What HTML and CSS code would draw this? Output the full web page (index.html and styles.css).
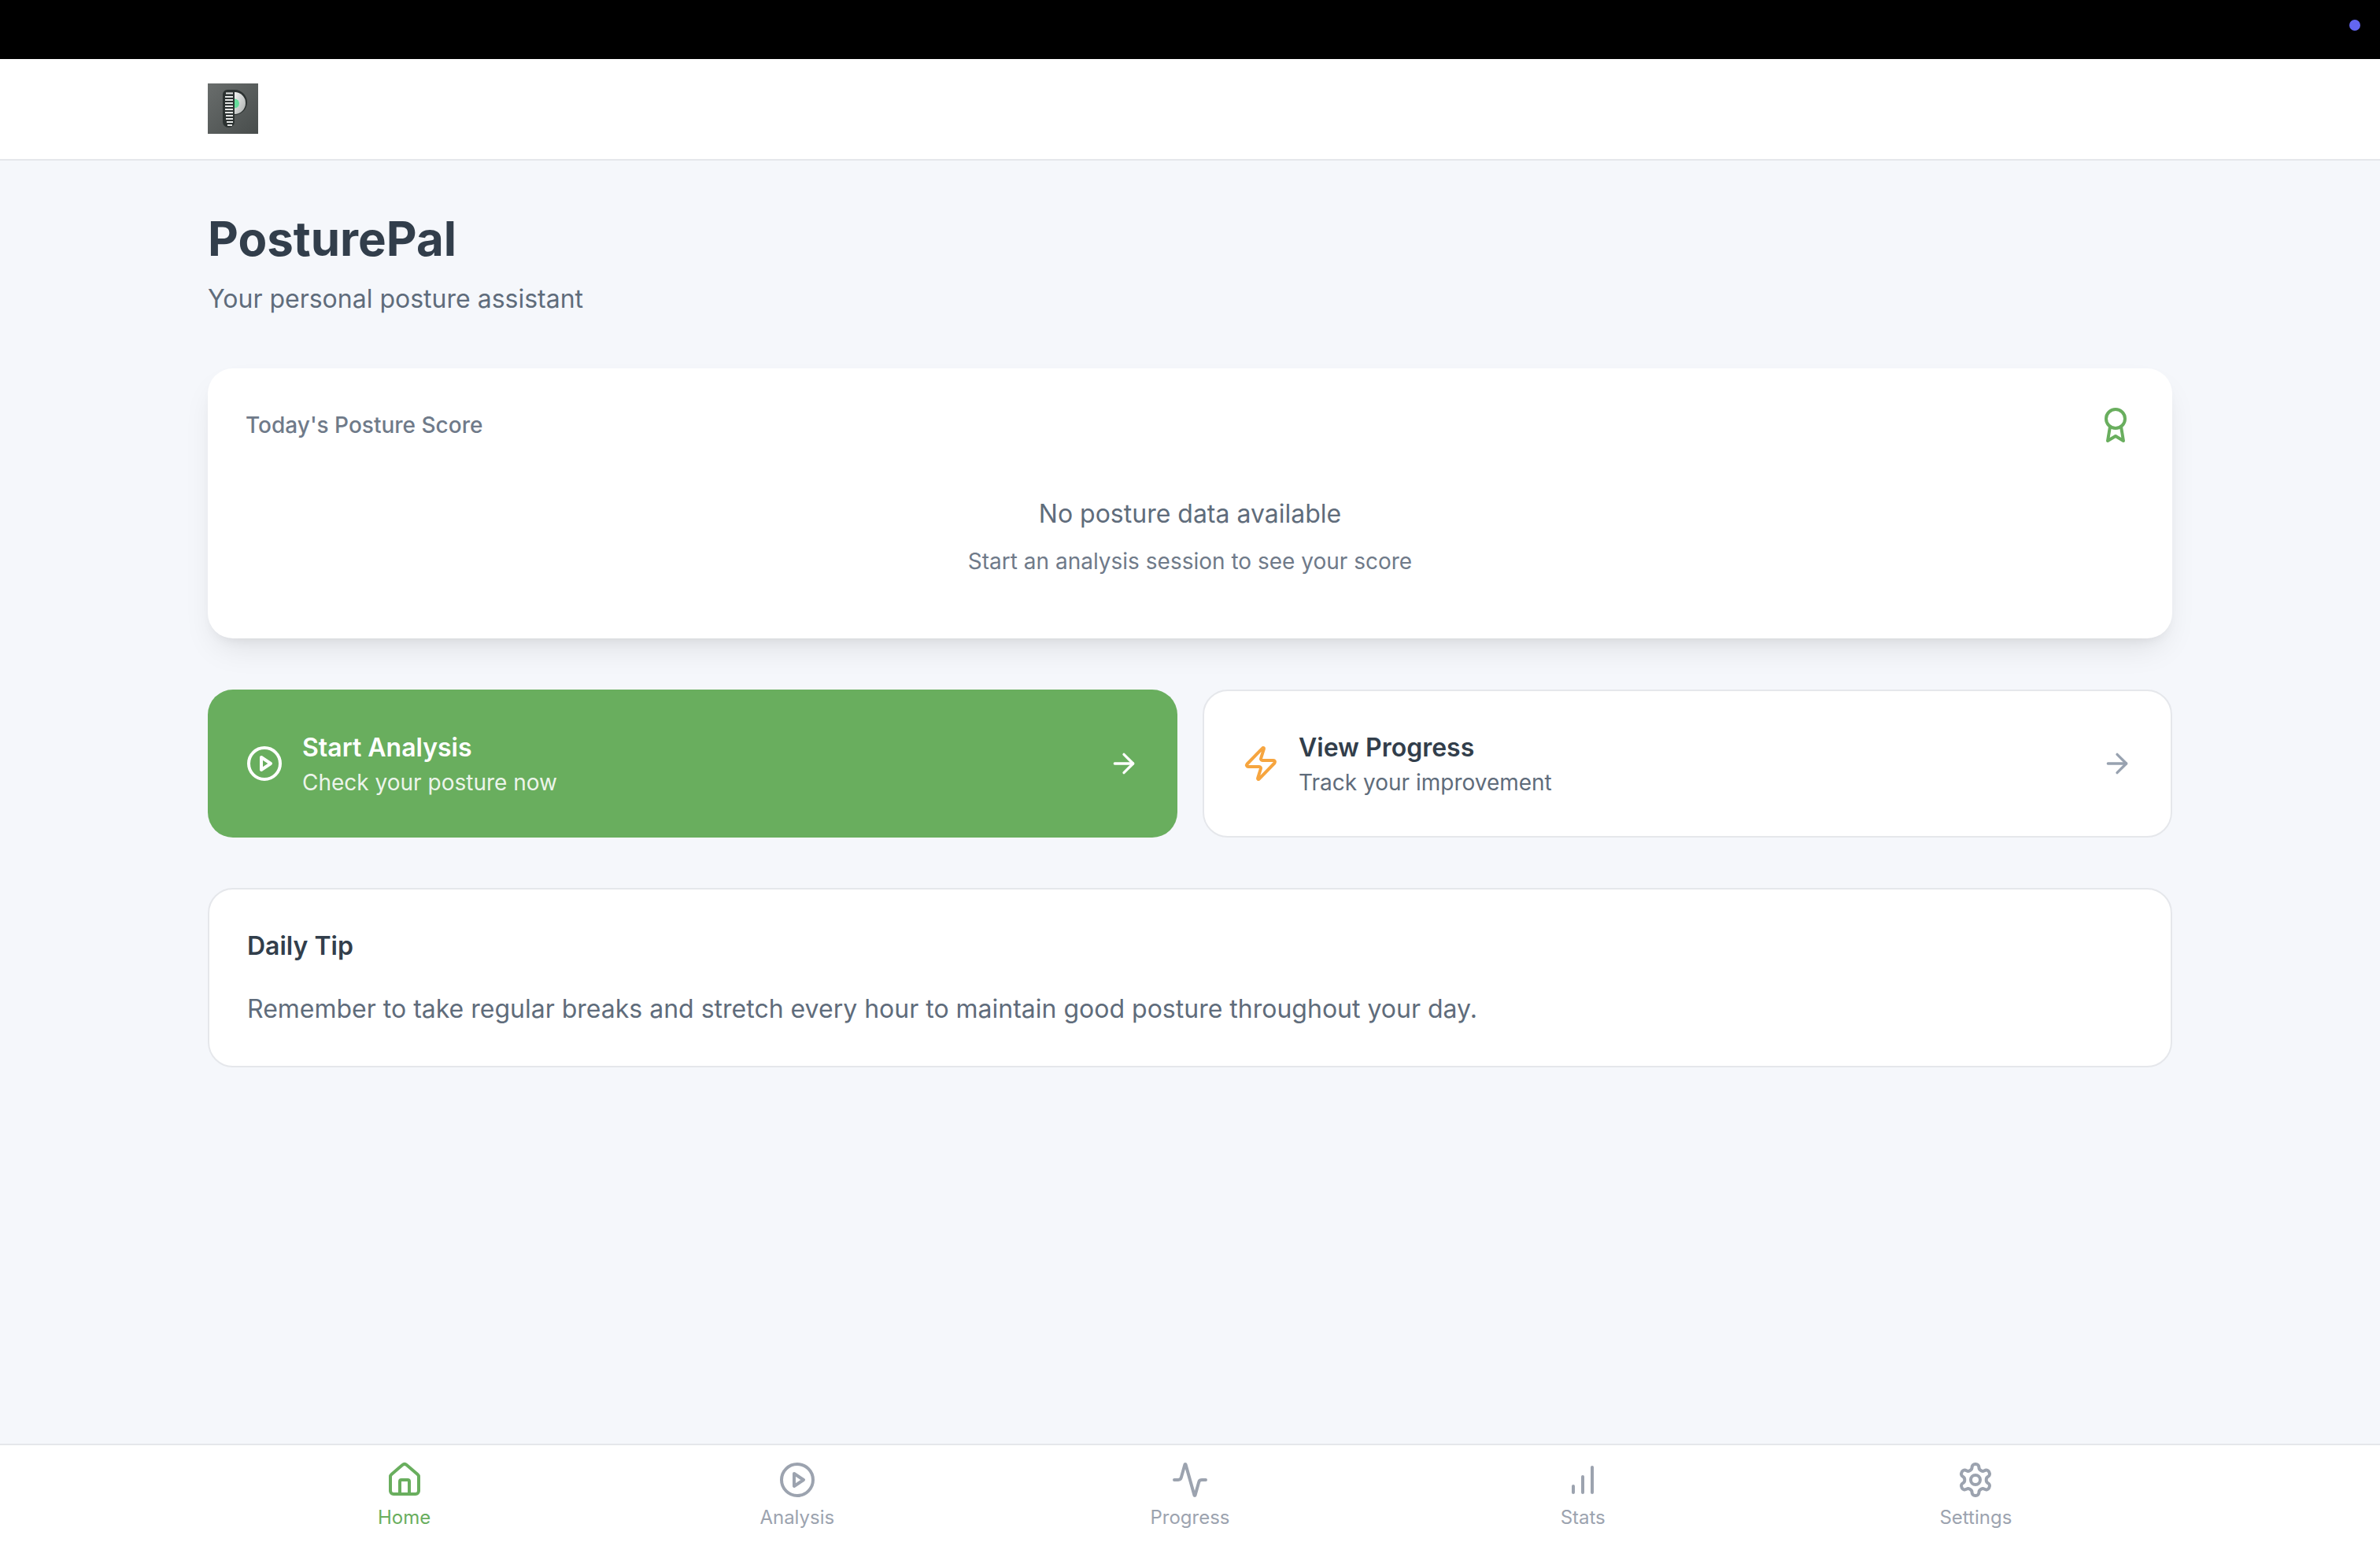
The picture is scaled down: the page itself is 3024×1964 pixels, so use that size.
FILE: index.html
```html
<!DOCTYPE html>
<html lang="en">
<head>
    <meta charset="UTF-8">
    <meta name="viewport" content="width=device-width, initial-scale=1.0">
    <title>PosturePal</title>
    <link rel="stylesheet" href="styles.css">
</head>
<body>
    <div class="top-strip">
        <span class="strip-dot"></span>
    </div>

    <header class="app-header">
        <div class="container">
            <svg class="logo" viewBox="0 0 64 64" role="img" aria-label="PosturePal logo">
                <defs>
                    <linearGradient id="logoBg" x1="0" y1="0" x2="1" y2="1">
                        <stop offset="0" stop-color="#696d6c"/>
                        <stop offset="1" stop-color="#484d4c"/>
                    </linearGradient>
                    <linearGradient id="logoBowl" x1="0" y1="0" x2="1" y2="1">
                        <stop offset="0" stop-color="#f2f3f2"/>
                        <stop offset="1" stop-color="#a9adac"/>
                    </linearGradient>
                </defs>
                <rect width="64" height="64" fill="url(#logoBg)"/>
                <path d="M25 8h9a16 16 0 0 1 0 32v9a7.500 7 0 0 1-15 0V14a6 6 0 0 1 6-6z" fill="#2c3231"/>
                <path d="M34 11a14 14 0 0 1 0 28z" fill="url(#logoBowl)"/>
                <path d="M34 19.500a6 6 0 0 1 0 12z" fill="#66dd9c"/>
                <path class="logo-ruler" d="M23 12.500h9M22 17h10M22 21h10M22 25h10M22 29h10M22 33h10M22 37h10M23 41h9M23 45h9M24 49h8M25 53h6"/>
            </svg>
        </div>
    </header>

    <main class="content">
        <div class="container">
            <h1 class="page-title">PosturePal</h1>
            <p class="page-subtitle">Your personal posture assistant</p>

            <section class="score-card">
                <div class="score-head">
                    <h2>Today's Posture Score</h2>
                    <svg class="icon icon-green" viewBox="0 0 24 24">
                        <circle cx="12" cy="8" r="6"/>
                        <path d="M15.477 12.890 17 22l-5-3-5 3 1.523-9.110"/>
                    </svg>
                </div>
                <div class="score-empty">
                    <p class="empty-title">No posture data available</p>
                    <p class="empty-text">Start an analysis session to see your score</p>
                </div>
            </section>

            <div class="actions">
                <a class="action action-primary" href="#">
                    <svg class="icon" viewBox="0 0 24 24">
                        <circle cx="12" cy="12" r="10"/>
                        <polygon points="10 8 16 12 10 16 10 8"/>
                    </svg>
                    <div class="action-text">
                        <div class="action-title">Start Analysis</div>
                        <div class="action-sub">Check your posture now</div>
                    </div>
                    <svg class="arrow" viewBox="0 0 24 24">
                        <path d="M5 12h14"/>
                        <path d="m12 5 7 7-7 7"/>
                    </svg>
                </a>
                <a class="action" href="#">
                    <svg class="icon icon-orange" viewBox="0 0 24 24">
                        <path d="M4 14a1 1 0 0 1-.78-1.630l9.900-10.200a.5.5 0 0 1 .86.46l-1.920 6.020A1 1 0 0 0 13 10h7a1 1 0 0 1 .78 1.630l-9.900 10.200a.5.5 0 0 1-.86-.46l1.920-6.020A1 1 0 0 0 11 14z"/>
                    </svg>
                    <div class="action-text">
                        <div class="action-title">View Progress</div>
                        <div class="action-sub">Track your improvement</div>
                    </div>
                    <svg class="arrow" viewBox="0 0 24 24">
                        <path d="M5 12h14"/>
                        <path d="m12 5 7 7-7 7"/>
                    </svg>
                </a>
            </div>

            <section class="tip-card">
                <h2>Daily Tip</h2>
                <p>Remember to take regular breaks and stretch every hour to maintain good posture throughout your day.</p>
            </section>
        </div>
    </main>

    <nav class="bottom-nav">
        <div class="nav-grid">
            <a class="nav-item active" href="#">
                <svg class="icon" viewBox="0 0 24 24">
                    <path d="M15 21v-8a1 1 0 0 0-1-1h-4a1 1 0 0 0-1 1v8"/>
                    <path d="M3 10a2 2 0 0 1 .709-1.528l7-5.999a2 2 0 0 1 2.582 0l7 5.999A2 2 0 0 1 21 10v9a2 2 0 0 1-2 2H5a2 2 0 0 1-2-2z"/>
                </svg>
                <span>Home</span>
            </a>
            <a class="nav-item" href="#">
                <svg class="icon" viewBox="0 0 24 24">
                    <circle cx="12" cy="12" r="10"/>
                    <polygon points="10 8 16 12 10 16 10 8"/>
                </svg>
                <span>Analysis</span>
            </a>
            <a class="nav-item" href="#">
                <svg class="icon" viewBox="0 0 24 24">
                    <path d="M22 12h-2.480a2 2 0 0 0-1.930 1.460l-2.350 8.360a.25.25 0 0 1-.48 0L9.240 2.180a.25.25 0 0 0-.48 0l-2.350 8.360A2 2 0 0 1 4.490 12H2"/>
                </svg>
                <span>Progress</span>
            </a>
            <a class="nav-item" href="#">
                <svg class="icon" viewBox="0 0 24 24">
                    <line x1="6" y1="20" x2="6" y2="16"/>
                    <line x1="12" y1="20" x2="12" y2="10"/>
                    <line x1="18" y1="20" x2="18" y2="4"/>
                </svg>
                <span>Stats</span>
            </a>
            <a class="nav-item" href="#">
                <svg class="icon" viewBox="0 0 24 24">
                    <path d="M12.220 2h-.44a2 2 0 0 0-2 2v.18a2 2 0 0 1-1 1.730l-.43.25a2 2 0 0 1-2 0l-.15-.08a2 2 0 0 0-2.730.73l-.22.38a2 2 0 0 0 .73 2.730l.15.1a2 2 0 0 1 1 1.720v.51a2 2 0 0 1-1 1.740l-.15.09a2 2 0 0 0-.73 2.730l.22.38a2 2 0 0 0 2.730.73l.15-.08a2 2 0 0 1 2 0l.43.25a2 2 0 0 1 1 1.730V20a2 2 0 0 0 2 2h.44a2 2 0 0 0 2-2v-.18a2 2 0 0 1 1-1.730l.43-.25a2 2 0 0 1 2 0l.15.08a2 2 0 0 0 2.730-.73l.22-.39a2 2 0 0 0-.73-2.730l-.15-.08a2 2 0 0 1-1-1.740v-.5a2 2 0 0 1 1-1.740l.15-.09a2 2 0 0 0 .73-2.730l-.22-.38a2 2 0 0 0-2.730-.73l-.15.08a2 2 0 0 1-2 0l-.43-.25a2 2 0 0 1-1-1.730V4a2 2 0 0 0-2-2z"/>
                    <circle cx="12" cy="12" r="3"/>
                </svg>
                <span>Settings</span>
            </a>
        </div>
    </nav>
</body>
</html>
```

FILE: styles.css
```css
* {
    box-sizing: border-box;
}

body {
    font-family: Inter, "Liberation Sans", sans-serif;
    margin: 0;
    min-height: 100vh;
    display: flex;
    flex-direction: column;
    background-color: #f5f7fb;
    color: #323e4b;
}

h1, h2, p {
    margin: 0;
}

a {
    text-decoration: none;
    color: inherit;
}

.container {
    width: 2496px;
    margin: 0 auto;
}

.top-strip {
    height: 75px;
    background: #000;
    display: flex;
    justify-content: flex-end;
    padding: 25px 25px 0 0;
}

.strip-dot {
    width: 14px;
    height: 14px;
    border-radius: 50%;
    background: #6366f1;
}

.app-header {
    height: 129px;
    background: white;
    border-bottom: 2px solid #e5e7eb;
    padding-top: 31px;
}

.logo {
    display: block;
    width: 64px;
    height: 64px;
}

.logo-ruler {
    fill: none;
    stroke: #e4e6e5;
    stroke-width: 2.200;
}

.content {
    flex: 1;
    padding-top: 59px;
}

.page-title {
    font-size: 60px;
    line-height: 80px;
    font-weight: 700;
    color: #323e4b;
}

.page-subtitle {
    margin-top: 15px;
    font-size: 32px;
    line-height: 44px;
    color: #5f6c7b;
}

.icon {
    width: 48px;
    height: 48px;
    flex-shrink: 0;
    fill: none;
    stroke: currentColor;
    stroke-width: 2;
    stroke-linecap: round;
    stroke-linejoin: round;
}

.icon-green {
    color: #69ae5e;
}

.icon-orange {
    color: #f6a53f;
}

.score-card {
    margin-top: 66px;
    height: 343px;
    padding: 48px;
    background: white;
    border-radius: 32px;
    box-shadow: 0 20px 40px -10px rgba(0, 0, 0, 0.1), 0 8px 16px -8px rgba(0, 0, 0, 0.08);
}

.score-head {
    display: flex;
    justify-content: space-between;
    align-items: center;
}

.score-head h2 {
    font-size: 28px;
    font-weight: 500;
    color: #6f7a89;
}

.score-empty {
    margin-top: 65px;
    text-align: center;
}

.empty-title {
    font-size: 32px;
    line-height: 48px;
    color: #5f6c7b;
}

.empty-text {
    margin-top: 16px;
    font-size: 28px;
    line-height: 40px;
    color: #6f7a89;
}

.actions {
    margin-top: 65px;
    display: grid;
    grid-template-columns: 1fr 1fr;
    gap: 32px;
}

.action {
    height: 188px;
    padding: 0 48px;
    display: flex;
    align-items: center;
    gap: 24px;
    background: white;
    border: 2px solid #e5e7eb;
    border-radius: 32px;
}

.action-primary {
    background: #69ae5e;
    border: none;
    color: white;
}

.action-text {
    flex: 1;
}

.action-title {
    font-size: 32px;
    line-height: 44px;
    font-weight: 600;
    padding-top: 1px;
}

.action-sub {
    font-size: 28px;
    line-height: 40px;
    margin-top: 2px;
    color: #5f6c7b;
}

.action-primary .action-sub {
    color: rgba(255, 255, 255, 0.9);
}

.arrow {
    width: 40px;
    height: 40px;
    flex-shrink: 0;
    fill: none;
    stroke: #98a2b0;
    stroke-width: 2;
    stroke-linecap: round;
    stroke-linejoin: round;
}

.action-primary .arrow {
    stroke: white;
}

.tip-card {
    margin-top: 64px;
    height: 228px;
    padding: 50px 48px 0;
    background: white;
    border: 2px solid #e5e7eb;
    border-radius: 32px;
}

.tip-card h2 {
    font-size: 32px;
    line-height: 44px;
    font-weight: 600;
}

.tip-card p {
    margin-top: 34px;
    font-size: 32px;
    line-height: 48px;
    color: #5f6c7b;
}

.bottom-nav {
    height: 130px;
    background: white;
    border-top: 2px solid #e5e7eb;
    padding-top: 20px;
}

.nav-grid {
    width: 2496px;
    margin: 0 auto;
    display: grid;
    grid-template-columns: repeat(5, 1fr);
}

.nav-item {
    display: flex;
    flex-direction: column;
    align-items: center;
    gap: 8px;
    font-size: 24px;
    line-height: 32px;
    color: #9ca3af;
}

.nav-item.active {
    color: #69ae5e;
}
```
